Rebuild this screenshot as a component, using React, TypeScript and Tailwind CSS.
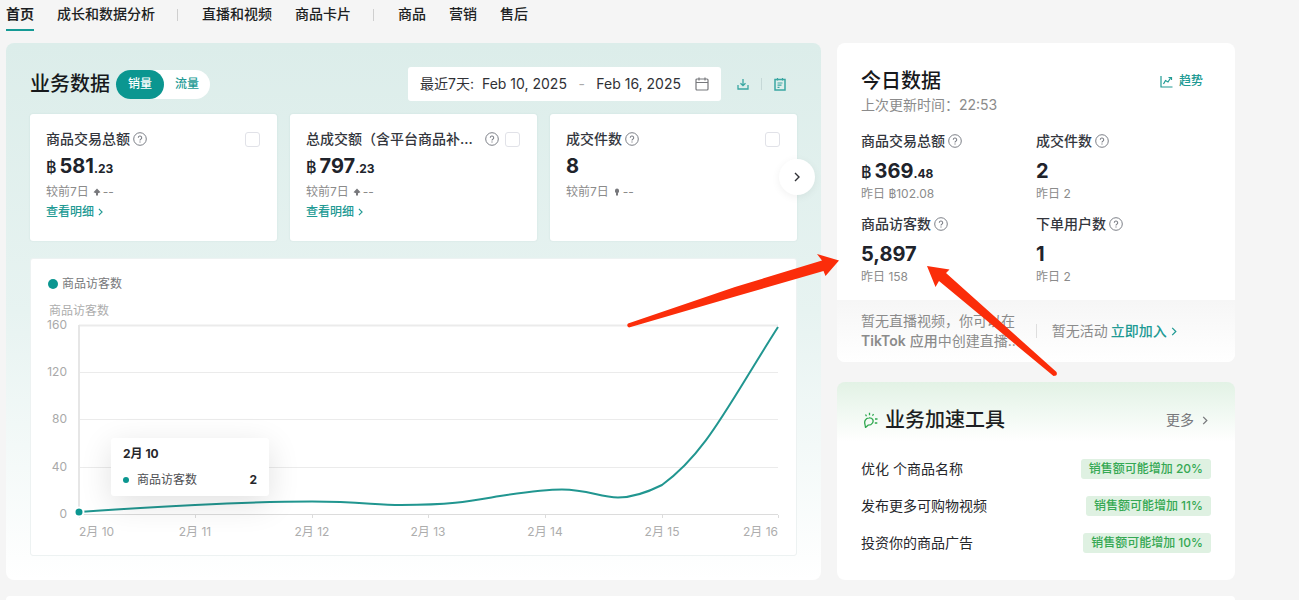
import React from "react";

const font = "font-['Inter','Noto_Sans_CJK_SC',sans-serif]";

const navGroups = [
  ["首页", "成长和数据分析"],
  ["直播和视频", "商品卡片"],
  ["商品", "营销", "售后"],
];

const metrics = [
  { label: "商品交易总额", long: false, currency: true, value: "581", cents: ".23", detail: true },
  { label: "总成交额（含平台商品补...", long: true, currency: true, value: "797", cents: ".23", detail: true },
  { label: "成交件数", long: false, currency: false, value: "8", cents: "", detail: false },
];

const today = [
  { label: "商品交易总额", currency: true, value: "369", cents: ".48", prev: "฿102.08" },
  { label: "成交件数", currency: false, value: "2", cents: "", prev: "2" },
  { label: "商品访客数", currency: false, value: "5,897", cents: "", prev: "158" },
  { label: "下单用户数", currency: false, value: "1", cents: "", prev: "2" },
];

const tools = [
  { name: "优化 个商品名称", gain: "20%" },
  { name: "发布更多可购物视频", gain: "11%" },
  { name: "投资你的商品广告", gain: "10%" },
];

const yTicks = [
  { label: "160", y: 67 },
  { label: "120", y: 114 },
  { label: "80", y: 161 },
  { label: "40", y: 209 },
  { label: "0", y: 256 },
];

const xTicks = [
  { label: "2月 10", x: 49, anchor: "start" as const },
  { label: "2月 11", x: 165, anchor: "middle" as const },
  { label: "2月 12", x: 282, anchor: "middle" as const },
  { label: "2月 13", x: 398, anchor: "middle" as const },
  { label: "2月 14", x: 515, anchor: "middle" as const },
  { label: "2月 15", x: 632, anchor: "middle" as const },
  { label: "2月 16", x: 748, anchor: "end" as const },
];

function HelpIcon() {
  return (
    <svg className="size-[14px] shrink-0" viewBox="0 0 14 14" fill="none" stroke="#7c7f87">
      <circle cx="7" cy="7" r="6.3" />
      <path d="M5.3 5.7a1.7 1.7 0 1 1 2.5 1.5c-.6.3-.8.6-.8 1.2" strokeWidth="1.1" />
      <path d="M7 9.4v1.2" strokeWidth="1.2" />
    </svg>
  );
}

function Chevron({ className }: { className: string }) {
  return (
    <svg className={className} viewBox="0 0 6 10" fill="none" stroke="currentColor" strokeWidth="1.4">
      <path d="M1 1l4 4-4 4" />
    </svg>
  );
}

function Amount({ currency, value, cents }: { currency: boolean; value: string; cents: string }) {
  return (
    <div className="flex h-6 items-baseline text-[#20232b]">
      {currency && <span className="mr-[3px] text-base leading-6 font-medium">฿</span>}
      <span className="text-xl leading-6 font-bold">{value}</span>
      {cents && <span className="text-xs leading-6 font-bold">{cents}</span>}
    </div>
  );
}

function Nav() {
  return (
    <nav className="flex h-[43px] items-start pl-[6px]">
      {navGroups.map((group, i) => (
        <React.Fragment key={i}>
          {i > 0 && <span className="mt-[9px] mr-6 ml-[22px] h-3 w-px bg-[#cfcfcf]" />}
          <div className="flex gap-[23px]">
            {group.map((item) => (
              <a
                key={item}
                href="#"
                className={
                  item === "首页"
                    ? "h-[31px] border-b-2 border-[#159a95] pt-1 text-sm leading-5 font-bold text-[#1d1f23]"
                    : "h-[31px] pt-1 text-sm leading-5 font-medium text-[#1d1f23]"
                }
              >
                {item}
              </a>
            ))}
          </div>
        </React.Fragment>
      ))}
    </nav>
  );
}

function MetricCard({ metric }: { metric: (typeof metrics)[number] }) {
  return (
    <div className="h-[127px] min-w-0 rounded-[3px] bg-white px-4 pt-[15px] shadow-[0_0_2px_rgba(0,80,80,0.1)]">
      <label className="flex h-5 items-center text-sm leading-5 font-medium text-[#33363d]">
        <span className={metric.long ? "mr-3 truncate" : "mr-[3px] truncate"}>{metric.label}</span>
        <HelpIcon />
        <input
          type="checkbox"
          className="mr-px ml-auto size-[15px] shrink-0 appearance-none rounded-[3px] border border-[#e1e2e8] bg-white"
        />
      </label>
      <div className="mt-[5px]">
        <Amount currency={metric.currency} value={metric.value} cents={metric.cents} />
      </div>
      <div className="mt-1 flex items-center text-xs leading-5 text-[#8b8b8b]">
        较前7日
        <svg className="ml-1 size-2" viewBox="0 0 8 8" fill="#77787c">
          {metric.detail ? <path d="M4 .5L7.500 4.200L5 5.200v2.300H3V5.200L.5 4.200z" /> : <path d="M2 2.500a2 2 0 0 1 4 0v2H5v3H3v-3H2z" />}
        </svg>
        <span className="ml-0.5">--</span>
      </div>
      {metric.detail && (
        <a href="#" className="flex items-center gap-1 text-xs leading-5 font-medium text-[#219a94]">
          查看明细
          <Chevron className="h-2 w-[5px]" />
        </a>
      )}
    </div>
  );
}

function VisitorChart() {
  return (
    <div className="relative mt-[17px] rounded-[3px] border border-[#edf2f2] bg-white">
      <svg className="block w-full" viewBox="1 1 765 296">
        <circle cx="23" cy="26" r="5" fill="#0b9690" />
        <text x="32" y="30" fontSize="12" fill="#77787b">商品访客数</text>
        <text x="19" y="57" fontSize="12" fill="#adadad">商品访客数</text>
        {yTicks.map((t) => (
          <g key={t.label}>
            <text x="37" y={t.y + 4} fontSize="12" fill="#a9a9a9" textAnchor="end">{t.label}</text>
            <path
              d={`M49 ${t.y}.5H748`}
              stroke={t.label === "0" ? "#dcdcdc" : "#ebebeb"}
              strokeWidth={t.label === "160" ? 2 : 1}
            />
          </g>
        ))}
        <path d="M49 67v190" stroke="#e6e6e6" strokeWidth="2" />
        {xTicks.map((t) => (
          <g key={t.label}>
            <path d={`M${t.x}.5 257v3`} stroke="#dcdcdc" />
            <text x={t.x} y="278" fontSize="12" fill="#adadad" textAnchor={t.anchor}>{t.label}</text>
          </g>
        ))}
        <path
          d="M49 254C90 251 126 249 165 247C205 245 243 243.500 282 243.500C330 243.500 345 247 371 247C425 246.500 440 243 470 238C500 233.500 515 231.500 532 231.500C558 231.500 570 239.500 588 239.500C603 239.500 618 234 632 227C676 195 697 149 748 69"
          fill="none"
          stroke="#219690"
          strokeWidth="2"
        />
        <circle cx="49" cy="254" r="4.500" fill="#0b9690" stroke="#fff" strokeWidth="2" />
      </svg>
      {/* Tooltip */}
      <div className="absolute top-[179px] left-[80px] w-[158px] rounded-[3px] bg-white px-3 py-1.5 text-xs shadow-[0_8px_32px_rgba(0,0,0,0.12)]">
        <div className="leading-5 font-bold text-[#26272b]">2月 10</div>
        <div className="mt-1.5 flex items-center leading-5 text-[#4c4d52]">
          <span className="mr-2 size-1.5 rounded-full bg-[#0b9690]" />
          商品访客数
          <span className="ml-auto font-bold text-[#26272b]">2</span>
        </div>
      </div>
    </div>
  );
}

function BusinessData() {
  return (
    <section className="min-w-0 flex-1 rounded-lg bg-gradient-to-b from-[#dcedea] via-[#e7f3f1] via-50% to-white px-6 py-6">
      <div className="flex h-[34px] items-center">
        <h2 className="text-xl leading-7 font-medium text-[#17191c]">业务数据</h2>
        <div className="ml-1.5 flex h-[29px] rounded-full bg-white text-xs font-medium">
          <button className="w-12 rounded-full bg-[#0b9690] text-white">销量</button>
          <button className="w-[46px] rounded-full text-[#219a94]">流量</button>
        </div>
        <button className="ml-auto flex h-[34px] w-[313px] items-center rounded-[3px] bg-white px-3 text-left text-sm text-[#303136]">
          <span>最近7天:</span>
          <span className="ml-2">Feb 10, 2025</span>
          <span className="flex-1 text-center text-[#aaa]">-</span>
          <span>Feb 16, 2025</span>
          <svg className="ml-3.5 size-[14px]" viewBox="0 0 14 14" fill="none" stroke="#77787c" strokeWidth="1.200">
            <rect x="1" y="2" width="12" height="11" rx="1" />
            <path d="M1 5.500h12M4 .5v3M10 .5v3" />
          </svg>
        </button>
        <button aria-label="下载" className="ml-4 text-[#3aa7a2]">
          <svg className="size-3" viewBox="0 0 12 12" fill="none" stroke="currentColor" strokeWidth="1.300">
            <path d="M6 1v6.500M3.500 5.200L6 7.700l2.500-2.500M1 7v4h10V7" />
          </svg>
        </button>
        <span className="mx-3 h-3 w-px bg-[#c6d8d7]" />
        <button aria-label="报告" className="mr-[11px] text-[#3aa7a2]">
          <svg className="h-[13px] w-3" viewBox="0 0 12 13" fill="none" stroke="currentColor" strokeWidth="1.500">
            <path d="M1 1.500h10v10.500H1z" />
            <path d="M3.500 0v2.500M8.500 0v2.500M3.500 5h5M3.500 7.200h4M3.500 9.400h2" strokeWidth="1.200" />
          </svg>
        </button>
      </div>

      <div className="relative mt-[13px]">
        <div className="grid grid-cols-3 gap-[13px]">
          {metrics.map((m) => (
            <MetricCard key={m.label} metric={m} />
          ))}
        </div>
        <button
          aria-label="下一页"
          className="absolute top-[45px] -right-[18px] flex size-9 items-center justify-center rounded-full bg-white text-[#303136] shadow-[0_2px_8px_rgba(0,0,0,0.06)]"
        >
          <Chevron className="h-[10px] w-[6px]" />
        </button>
      </div>

      <VisitorChart />
    </section>
  );
}

function Arrows() {
  return (
    <svg className="pointer-events-none absolute top-[207px] -left-[217px] z-10 h-[130px] w-[440px]" viewBox="620 250 440 130" fill="#fb2d0a">
      <path d="M628 323.500L735 287L822 260.500L817 254L839 260.500L825.500 276L823.500 271L737 296L629 327.500Q626 326 628 323.500z" />
      <path d="M927 266L949.500 269.500L946 273L1056.500 372Q1058 376 1053.500 376L939 281L935.500 287z" />
    </svg>
  );
}

function TodayData() {
  return (
    <section className="relative rounded-lg bg-white">
      <div className="px-6 pt-6 pb-[13px]">
        <div className="flex items-center justify-between">
          <h2 className="text-xl leading-7 font-medium text-[#17191c]">今日数据</h2>
          <a href="#" className="mr-2 flex items-center gap-1.5 text-xs font-medium text-[#219a94]">
            <svg className="size-[13px]" viewBox="0 0 13 13" fill="none" stroke="currentColor" strokeWidth="1.200">
              <path d="M1 1v11h11.500M3.500 9l2-3.500 2.500 1.500 2.500-4M8.500 2.500h3v2.500" />
            </svg>
            趋势
          </a>
        </div>
        <p className="text-sm leading-5 text-[#8b8b8b]">上次更新时间：22:53</p>
        <div className="mt-4 grid grid-cols-2 gap-y-[10px]">
          {today.map((m) => (
            <div key={m.label}>
              <div className="flex items-center gap-[3px] text-sm leading-5 font-medium text-[#33363d]">
                {m.label}
                <HelpIcon />
              </div>
              <div className="mt-2">
                <Amount currency={m.currency} value={m.value} cents={m.cents} />
              </div>
              <div className="mt-px text-xs leading-5 text-[#8b8b8b]">昨日 {m.prev}</div>
            </div>
          ))}
        </div>
      </div>
      <div className="flex h-[62px] items-center rounded-b-lg bg-gradient-to-b from-[#f6f6f6] to-white px-6 text-sm text-[#8b8b8b]">
        <p className="leading-5 whitespace-nowrap">
          暂无直播视频，你可以在
          <br />
          <span className="font-semibold">TikTok</span> <span className="font-medium">应用</span>中创建直播...
        </p>
        <span className="mr-[15px] ml-4 h-[14px] w-px bg-[#dedede]" />
        <span>暂无活动</span>
        <a href="#" className="ml-[3px] flex items-center gap-1 font-medium text-[#219a94]">
          立即加入
          <Chevron className="h-[9px] w-[6px]" />
        </a>
      </div>
      <Arrows />
    </section>
  );
}

function Accelerators() {
  return (
    <section className="mt-5 flex-1 rounded-lg bg-white bg-gradient-to-b from-[#e2f2e5] to-white to-[60px] px-6 pt-6">
      <div className="flex h-7 items-center">
        <svg className="ml-0.5 size-4" viewBox="0 0 16 16" fill="none" stroke="#2fa84f" strokeWidth="1.300" strokeLinejoin="round">
          <path d="M2.500 15.500L2 12.500C1 9.500 2.500 6 6 5.800C9.500 5.500 11 8.500 9.500 11C8.500 12.800 6.500 13.200 5 13.200z" />
          <path d="M2.500 2.500l1 1.800M6.500 .8v2.400M10.500 2l-1 1.800M12 7h2.500M11.800 11h2.500" />
        </svg>
        <h2 className="ml-1.5 text-xl leading-7 font-medium text-[#1d1f23]">业务加速工具</h2>
        <a href="#" className="mr-[3px] ml-auto flex items-center gap-2 text-sm text-[#77787c]">
          更多
          <Chevron className="h-[9px] w-[6px]" />
        </a>
      </div>
      <ul className="mt-[25px] flex flex-col gap-[17px]">
        {tools.map((t) => (
          <li key={t.name} className="flex items-center justify-between text-sm leading-5 text-[#26272b]">
            {t.name}
            <span className="rounded-[3px] bg-[#dff1e2] px-2 text-xs leading-5 font-medium text-[#35a853]">
              销售额可能增加 {t.gain}
            </span>
          </li>
        ))}
      </ul>
    </section>
  );
}

export default function App() {
  return (
    <div className={`${font} flex min-h-screen flex-col bg-[#f5f5f5]`}>
      <Nav />
      <main className="mr-16 ml-[6px] flex gap-4">
        <BusinessData />
        <aside className="flex w-[398px] shrink-0 flex-col">
          <TodayData />
          <Accelerators />
        </aside>
      </main>
      <section className="mt-4 mr-16 ml-[6px] flex-1 rounded-t-lg bg-white" />
    </div>
  );
}
